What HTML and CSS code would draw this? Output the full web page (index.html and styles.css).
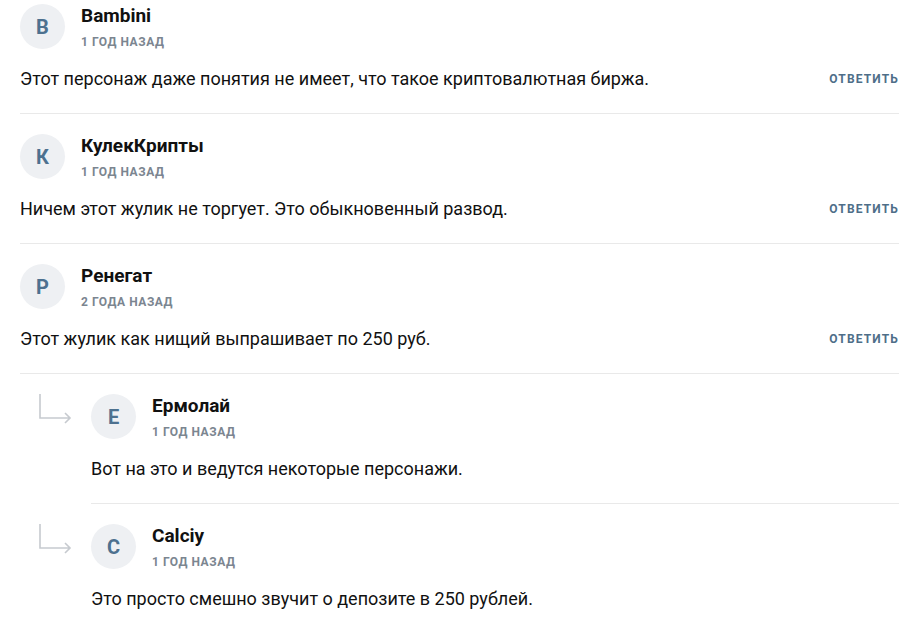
FILE: index.html
```html
<!DOCTYPE html>
<html lang="ru">
<head>
<meta charset="utf-8">
<link rel="stylesheet" href="styles.css">
</head>
<body>
<div class="comments">
  <div class="comment">
    <div class="head">
      <div class="avatar">B</div>
      <div class="meta"><div class="name">Bambini</div><div class="date">1 год назад</div></div>
    </div>
    <div class="body"><p class="text">Этот персонаж даже понятия не имеет, что такое криптовалютная биржа.</p><a class="reply">Ответить</a></div>
  </div>
  <div class="comment">
    <div class="head">
      <div class="avatar">К</div>
      <div class="meta"><div class="name">КулекКрипты</div><div class="date">1 год назад</div></div>
    </div>
    <div class="body"><p class="text">Ничем этот жулик не торгует. Это обыкновенный развод.</p><a class="reply">Ответить</a></div>
  </div>
  <div class="comment">
    <div class="head">
      <div class="avatar">Р</div>
      <div class="meta"><div class="name">Ренегат</div><div class="date">2 года назад</div></div>
    </div>
    <div class="body"><p class="text">Этот жулик как нищий выпрашивает по 250 руб.</p><a class="reply">Ответить</a></div>
  </div>
  <div class="thread">
    <div class="child">
      <svg class="arrow" width="36" height="30" viewBox="0 0 36 30"><path d="M2 0 V24 H32 M27 19 L32 24 L27 29" fill="none" stroke="#c6cacf" stroke-width="1.6"/></svg>
      <div class="comment nested">
        <div class="head">
          <div class="avatar">Е</div>
          <div class="meta"><div class="name">Ермолай</div><div class="date">1 год назад</div></div>
        </div>
        <div class="body"><p class="text">Вот на это и ведутся некоторые персонажи.</p></div>
      </div>
    </div>
    <div class="child">
      <svg class="arrow" width="36" height="30" viewBox="0 0 36 30"><path d="M2 0 V24 H32 M27 19 L32 24 L27 29" fill="none" stroke="#c6cacf" stroke-width="1.6"/></svg>
      <div class="comment nested last">
        <div class="head">
          <div class="avatar">С</div>
          <div class="meta"><div class="name">Calciy</div><div class="date">1 год назад</div></div>
        </div>
        <div class="body"><p class="text">Это просто смешно звучит о депозите в 250 рублей.</p></div>
      </div>
    </div>
  </div>
</div>
</body>
</html>
```
FILE: styles.css
```css
* { box-sizing: border-box; }
html, body { margin: 0; background: #fff; }
body {
  font-family: Roboto, "Noto Sans", sans-serif;
  color: #111;
}
.comments {
  padding: 4px 24px 0 20px;
}
.comment {
  padding: 0 0 22px;
  border-bottom: 1px solid #e9e9e9;
  margin-bottom: 20px;
}
.head {
  display: flex;
  align-items: flex-start;
  height: 45px;
}
.avatar {
  width: 45px;
  height: 45px;
  border-radius: 50%;
  background: #eef0f3;
  color: #4d718f;
  font-weight: 700;
  font-size: 20px;
  display: flex;
  align-items: center;
  justify-content: center;
  flex-shrink: 0;
}
.meta {
  margin-left: 16px;
  padding-top: 1px;
}
.name {
  font-weight: 700;
  font-size: 19px;
  line-height: 22px;
  color: #111;
}
.date {
  margin-top: 7px;
  font-weight: 700;
  font-size: 12px;
  letter-spacing: 0.55px;
  text-transform: uppercase;
  color: #7b8590;
  line-height: 16px;
}
.body {
  margin-top: 18px;
  display: flex;
  align-items: center;
  justify-content: space-between;
}
.text {
  margin: 0;
  font-size: 18px;
  line-height: 24px;
  color: #111;
}
.reply {
  font-weight: 700;
  font-size: 12px;
  letter-spacing: 1.15px;
  text-transform: uppercase;
  color: #4e6e88;
  line-height: 16px;
  cursor: pointer;
}
.child {
  display: flex;
  align-items: flex-start;
}
.arrow {
  flex-shrink: 0;
  margin: 0 0 0 18px;
  width: 36px;
}
.nested {
  flex: 1;
  margin-left: 17px;
}
.nested.last {
  border-bottom: none;
}
```
